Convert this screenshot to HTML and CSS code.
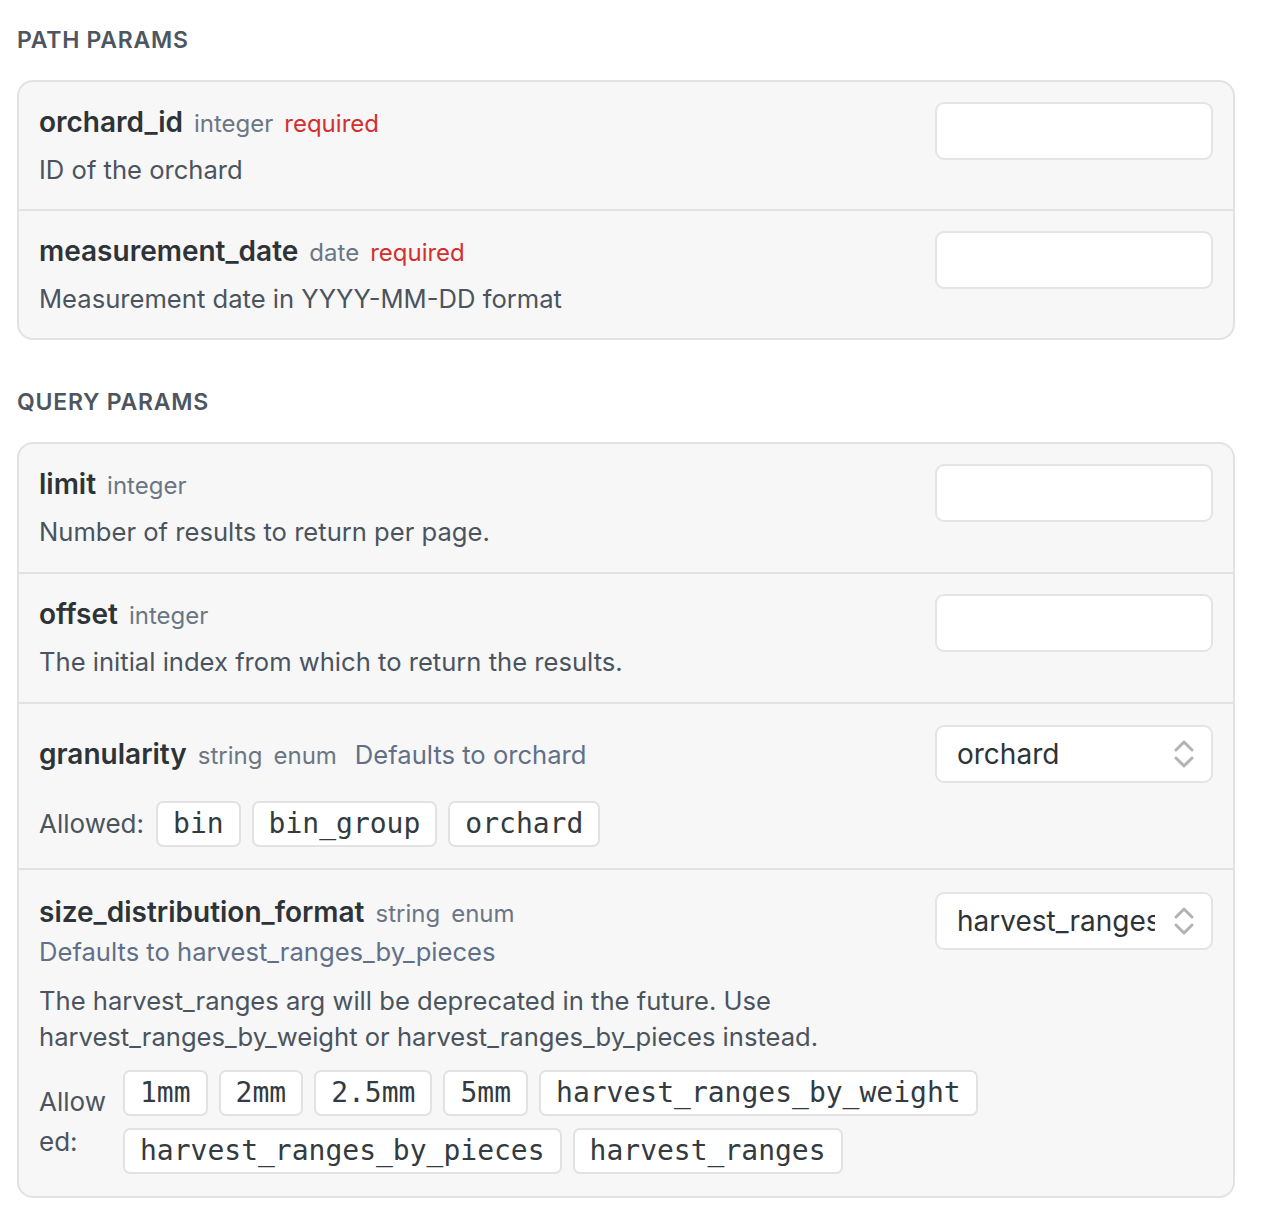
FILE: index.html
```html
<!DOCTYPE html>
<html lang="en">
<head>
<meta charset="utf-8">
<title>Params</title>
<link rel="stylesheet" href="styles.css">
</head>
<body>
<main class="page">
  <section class="section">
    <h2 class="section-title">PATH PARAMS</h2>
    <div class="card">
      <div class="row">
        <div class="info">
          <div class="head">
            <span class="name">orchard_id</span>
            <span class="type">integer</span>
            <span class="req">required</span>
          </div>
          <p class="desc">ID of the orchard</p>
        </div>
        <div class="control"><div class="input"></div></div>
      </div>
      <div class="row">
        <div class="info">
          <div class="head">
            <span class="name">measurement_date</span>
            <span class="type">date</span>
            <span class="req">required</span>
          </div>
          <p class="desc">Measurement date in YYYY-MM-DD format</p>
        </div>
        <div class="control"><div class="input"></div></div>
      </div>
    </div>
  </section>

  <section class="section">
    <h2 class="section-title">QUERY PARAMS</h2>
    <div class="card card--query">
      <div class="row">
        <div class="info">
          <div class="head">
            <span class="name">limit</span>
            <span class="type">integer</span>
          </div>
          <p class="desc">Number of results to return per page.</p>
        </div>
        <div class="control"><div class="input"></div></div>
      </div>
      <div class="row">
        <div class="info">
          <div class="head">
            <span class="name">offset</span>
            <span class="type">integer</span>
          </div>
          <p class="desc">The initial index from which to return the results.</p>
        </div>
        <div class="control"><div class="input"></div></div>
      </div>
      <div class="row row--enum">
        <div class="info">
          <div class="head">
            <span class="name">granularity</span>
            <span class="type">string</span>
            <span class="type">enum</span>
            <span class="default default--inline">Defaults to orchard</span>
          </div>
        </div>
        <div class="control control--lift">
          <div class="select">
            <span class="select-value">orchard</span>
            <svg class="chev" width="22" height="30" viewBox="0 0 22 30"><path d="M3 11 L11 3 L19 11 M3 19 L11 27 L19 19" fill="none" stroke="#b3b3b3" stroke-width="3" stroke-linecap="round" stroke-linejoin="round"/></svg>
          </div>
        </div>
        <div class="allowed allowed--inline">
          <span class="allowed-label">Allowed:</span>
          <div class="chips">
            <code class="chip">bin</code>
            <code class="chip">bin_group</code>
            <code class="chip">orchard</code>
          </div>
        </div>
      </div>
      <div class="row row--last">
        <div class="info">
          <div class="head">
            <span class="name">size_distribution_format</span>
            <span class="type">string</span>
            <span class="type">enum</span>
          </div>
          <div class="default default--block">Defaults to harvest_ranges_by_pieces</div>
          <p class="desc">The harvest_ranges arg will be deprecated in the future. Use harvest_ranges_by_weight or harvest_ranges_by_pieces instead.</p>
        </div>
        <div class="control">
          <div class="select">
            <span class="select-value">harvest_ranges_by_pieces</span>
            <svg class="chev" width="22" height="30" viewBox="0 0 22 30"><path d="M3 11 L11 3 L19 11 M3 19 L11 27 L19 19" fill="none" stroke="#b3b3b3" stroke-width="3" stroke-linecap="round" stroke-linejoin="round"/></svg>
          </div>
        </div>
        <div class="allowed allowed--wrap">
          <span class="allowed-label allowed-label--narrow">Allowed:</span>
          <div class="chips">
            <code class="chip">1mm</code>
            <code class="chip">2mm</code>
            <code class="chip">2.5mm</code>
            <code class="chip">5mm</code>
            <code class="chip">harvest_ranges_by_weight</code>
            <code class="chip">harvest_ranges_by_pieces</code>
            <code class="chip">harvest_ranges</code>
          </div>
        </div>
      </div>
    </div>
  </section>
</main>
</body>
</html>
```

FILE: styles.css
```css
* { box-sizing: border-box; }

body {
  margin: 0;
  background: #ffffff;
  font-family: Inter, "Noto Sans", "Liberation Sans", sans-serif;
  color: #2e3338;
}

.page {
  width: 1218px;
  margin-left: 17px;
  padding-top: 26px;
}

.section + .section { margin-top: 48px; }

.section-title {
  margin: 0 0 26px;
  font-size: 23px;
  line-height: 28px;
  font-weight: 600;
  letter-spacing: 0.75px;
  color: #4d5660;
}

.card {
  background: #f7f7f7;
  border: 2px solid #e2e2e2;
  border-radius: 16px;
  overflow: hidden;
}

.row {
  display: grid;
  grid-template-columns: minmax(0, 1fr) 278px;
  column-gap: 24px;
  align-items: start;
  padding: 20px 20px 21px;
}

.card--query .row { padding-bottom: 22px; }

.row + .row { border-top: 2px solid #e2e2e2; }

.info { min-width: 0; }

.head {
  display: flex;
  align-items: baseline;
  flex-wrap: wrap;
  column-gap: 11px;
  line-height: 40px;
}

.name {
  font-size: 28px;
  font-weight: 600;
  line-height: 40px;
  color: #2e3338;
}

.type {
  font-size: 24px;
  line-height: 34px;
  color: #6b7684;
}

.req {
  font-size: 24px;
  line-height: 34px;
  color: #d32f2f;
}

.desc {
  margin: 10px 0 0;
  font-size: 25.6px;
  line-height: 36px;
  color: #4b545e;
}

.default {
  font-size: 25.6px;
  color: #617088;
}

.default--inline {
  margin-left: 7px;
  line-height: 34px;
}

.default--block {
  line-height: 36px;
  margin-top: 2px;
}

.default--block + .desc { margin-top: 13px; }

.card--query .row--enum {
  padding-top: 30px;
  padding-bottom: 21px;
}

.card--query .row--last {
  padding-top: 22px;
  padding-bottom: 22px;
}

.control--lift { margin-top: -9px; }

.allowed {
  grid-column: 1 / -1;
  display: flex;
  align-items: center;
  gap: 12px;
}

.allowed--inline { margin-top: 18px; }

.allowed--wrap { margin-top: 15px; }

.allowed-label {
  font-size: 26px;
  line-height: 40px;
  color: #4b545e;
  flex-shrink: 0;
}

.allowed-label--narrow {
  width: 72px;
  word-break: break-all;
}

.chips {
  display: flex;
  flex-wrap: wrap;
  gap: 12px 11px;
  min-width: 0;
}

.chip {
  display: inline-block;
  font-family: "DejaVu Sans Mono", "Liberation Mono", monospace;
  font-size: 28px;
  line-height: 32px;
  padding: 5px 15px;
  background: #ffffff;
  border: 2px solid #e2e2e2;
  border-radius: 7px;
  color: #333a40;
}

.input {
  height: 58px;
  background: #ffffff;
  border: 2px solid #e4e4e4;
  border-radius: 9px;
}

.select {
  height: 58px;
  background: #ffffff;
  border: 2px solid #e4e4e4;
  border-radius: 9px;
  display: flex;
  align-items: center;
  padding: 0 16px 0 20px;
  gap: 18px;
}

.select-value {
  flex: 1;
  min-width: 0;
  overflow: hidden;
  white-space: nowrap;
  font-size: 28px;
  color: #2e3338;
}

.chev { flex-shrink: 0; }
```
